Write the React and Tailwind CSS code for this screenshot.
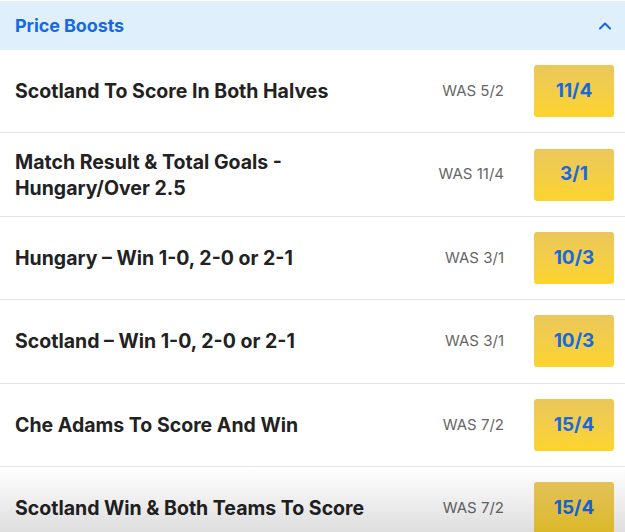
import { ChevronUp } from 'lucide-react';

const boosts = [
  { id: 1, title: 'Scotland To Score In Both Halves', was: '5/2', odds: '11/4' },
  { id: 2, title: 'Match Result & Total Goals - Hungary/Over 2.5', was: '11/4', odds: '3/1' },
  { id: 3, title: 'Hungary – Win 1-0, 2-0 or 2-1', was: '3/1', odds: '10/3' },
  { id: 4, title: 'Scotland – Win 1-0, 2-0 or 2-1', was: '3/1', odds: '10/3' },
  { id: 5, title: 'Che Adams To Score And Win', was: '7/2', odds: '15/4' },
  { id: 6, title: 'Scotland Win & Both Teams To Score', was: '7/2', odds: '15/4' },
];

export default function App() {
  return (
    <div className="relative w-[625px] h-[532px] overflow-hidden bg-white font-['Inter','Liberation_Sans',sans-serif]">
      <div className="mt-px h-[49px] bg-[#dff0fc] flex items-center justify-between pl-[15px] pr-[10px]">
        <h2 className="text-[18px] font-bold text-[#1669e0] tracking-[-0.1px]">Price Boosts</h2>
        <ChevronUp className="w-[20px] h-[20px] text-[#1669e0]" strokeWidth={2.5} />
      </div>

      {boosts.map(b => (
        <div key={b.id} className="h-[83.4px] border-b border-[#e6e6e6] flex items-center pl-[15px] pr-[11px]">
          <p className="flex-1 max-w-[390px] text-[19.5px] leading-[26px] font-bold text-[#222]">{b.title}</p>
          <span className="ml-auto text-[15px] text-[#666]">WAS {b.was}</span>
          <button className="ml-[30px] w-[80px] h-[52px] rounded-[3px] bg-gradient-to-b from-[#eac75a] to-[#fdd42a] text-[#1669e0] text-[19px] font-bold">
            {b.odds}
          </button>
        </div>
      ))}

      <div className="pointer-events-none absolute left-0 right-0 bottom-0 h-[65px] bg-gradient-to-b from-transparent to-[rgba(0,0,0,0.13)]" />
    </div>
  );
}
